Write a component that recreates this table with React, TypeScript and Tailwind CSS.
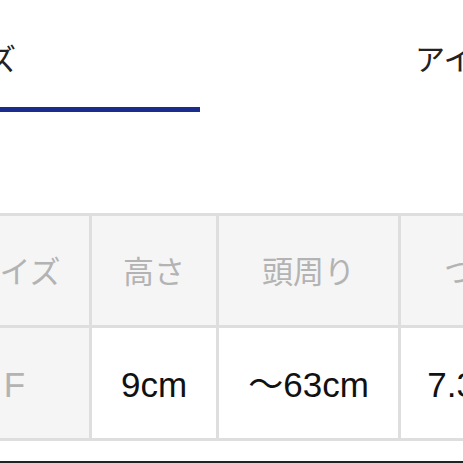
const jp = "font-['Noto_Sans_CJK_JP','Noto_Sans',sans-serif]";
const num = "font-['Liberation_Sans','Noto_Sans_CJK_JP',sans-serif]";

const headers = ["サイズ", "高さ", "頭周り", "つば"];
const values = ["F", "9cm", "〜63cm", "7.3cm"];

export default function App() {
  return (
    <div className="relative h-[463px] w-[463px] overflow-hidden bg-white">
      {/* tabs */}
      <div className={`${jp} ml-[-73px] flex w-max pt-[39px] text-[30px] leading-[36px] text-[#222]`}>
        <div className="flex w-[273px] shrink-0 flex-col">
          <span className="whitespace-nowrap">サイズ</span>
          <div className="mt-[32px] h-[5px] w-full bg-[#1b2c8f]" />
        </div>
        <span className="ml-[215px] shrink-0 whitespace-nowrap">アイテム</span>
      </div>

      {/* size table */}
      <div className="ml-[-60px] mt-[101px] grid w-max grid-cols-[149px_124px_179px_148px] grid-rows-[109px_110px] gap-[3px] bg-[#dedede] py-[3px]">
        {headers.map((h) => (
          <div key={h} className={`${jp} flex items-center justify-center bg-[#f5f5f5] text-[31px] text-[#b3b3b3]`}>
            {h}
          </div>
        ))}
        {values.map((v, i) => (
          <div
            key={v}
            className={`${num} flex items-center justify-center pt-[4px] text-[35px] ${
              i === 0 ? "bg-[#f5f5f5] text-[#b3b3b3]" : "bg-white text-[#111]"
            }`}
          >
            {v}
          </div>
        ))}
      </div>

      <div className="mt-[20px] h-[2px] w-full bg-[#222]" />
    </div>
  );
}
